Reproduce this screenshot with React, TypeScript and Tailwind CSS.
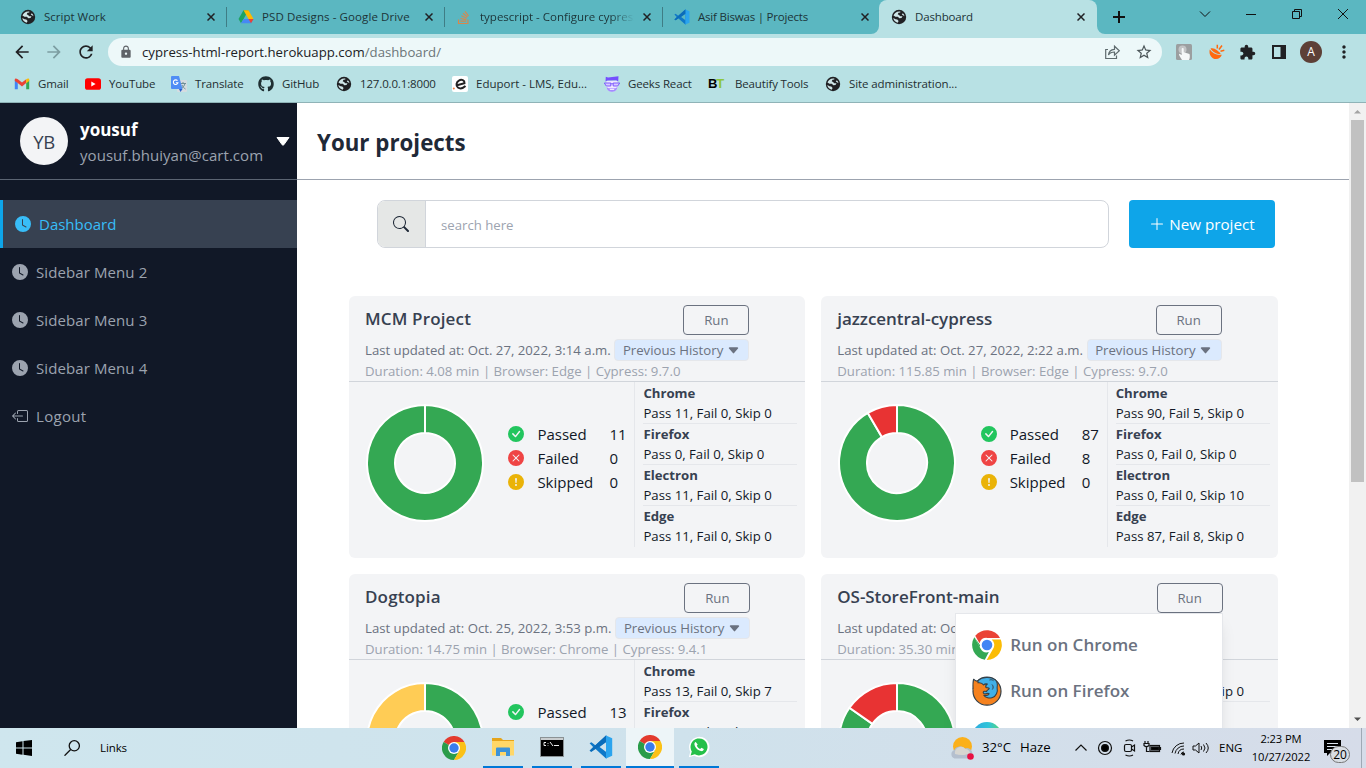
import React from "react";
import {
  BsBoxArrowLeft, BsCaretDownFill, BsCheckCircleFill, BsClockFill, BsExclamationCircleFill,
  BsPlusLg, BsSearch, BsXCircleFill,
} from "react-icons/bs";
import { MdArrowBack, MdArrowForward, MdExtension, MdLock, MdMoreVert, MdRefresh, MdStarBorder } from "react-icons/md";
import { FaGithub, FaStackOverflow } from "react-icons/fa";

/* ---------- icons ---------- */

function Globe() {
  return (
    <svg width="16" height="16" viewBox="0 0 16 16" className="shrink-0">
      <circle cx="8" cy="8" r="7.2" fill="#202124" />
      <path d="M9.300 2.500C6 2 3.300 3.800 2.500 6.500l2 1.300h2.300l1.500 1.500 2.200-.3 1-1.800H9.300L8 6l-1.300-.7.800-1.500 1.800-.3z" fill="#cfe6e8" />
      <path d="M2.300 8.900c.4 2.300 2 4.200 4.400 4.800l.9-1.700-1.300-1.500-1.800-.3z" fill="#cfe6e8" />
      <path d="M11.800 4.200l-1 1.400 2.700 1.600c-.2-1.200-.8-2.200-1.700-3z" fill="#cfe6e8" />
    </svg>
  );
}

function Drive() {
  return (
    <svg width="16" height="16" viewBox="0 0 16 16" className="shrink-0">
      <path d="M5.500 1.200h5L5.600 9.900 3 14.300.5 9.900z" fill="#1ea362" />
      <path d="M5.500 1.200h5l5 8.700h-5z" fill="#ffba00" />
      <path d="M5.600 9.900h9.900L13 14.300H3z" fill="#4688f4" />
      <path d="M10.500 9.900h5L13 14.300z" fill="#ea4335" />
    </svg>
  );
}

function VsCode({ size }: { size: number }) {
  return (
    <svg width={size} height={size} viewBox="0 0 24 24" className="shrink-0">
      <path d="M17 .6L6.300 10.300 2.400 7.300.6 8.200 4.100 12 .6 15.800l1.800.9 3.900-3L17 23.400l1-.5V1z M17.200 7v10l-6.600-5z" fill="#0f78c8" fillRule="evenodd" />
      <path d="M17 .6l6.200 2.700v17.400L17 23.400z" fill="#2ba4ee" />
      <path d="M.6 15.800L17 .6v6.500L2.400 16.700z" fill="#0b6cba" />
    </svg>
  );
}

function Chrome({ size }: { size: number }) {
  return (
    <svg width={size} height={size} viewBox="0 0 48 48" className="shrink-0">
      <path d="M24 24L3.200 12A24 24 0 0 1 44.800 12z" fill="#e33b2e" />
      <path d="M24 24L34.400 30 24 48A24 24 0 0 1 3.200 12z" fill="#2a9c4a" />
      <path d="M24 12h20.800A24 24 0 0 1 24 48l10.400-18z" fill="#fbc116" />
      <circle cx="24" cy="24" r="12" fill="#fff" />
      <circle cx="24" cy="24" r="9.400" fill="#3a7cec" />
    </svg>
  );
}

function MenuChrome() {
  return (
    <svg width="30" height="30" viewBox="0 0 48 48" className="shrink-0">
      <path d="M5.200 9.300A24 24 0 0 1 44.800 12.600L24 12.600A11.800 11.800 0 0 0 12 21.300z" fill="#ea4335" />
      <path d="M46 15A24 24 0 0 1 23.500 48l10.300-18A11.500 11.500 0 0 0 31.500 15z" fill="#fbbc05" />
      <path d="M3.700 11.500L13.600 29.500A11.500 11.500 0 0 0 27 35.200L20.500 47.700A24 24 0 0 1 3.700 11.500z" fill="#34a853" />
      <path d="M3.700 11.500L12.500 27.500 12.800 24z" fill="#34a853" />
      <circle cx="24" cy="24" r="8.500" fill="#4285f4" />
    </svg>
  );
}

function Firefox() {
  return (
    <svg width="30" height="30" viewBox="0 0 30 30" className="shrink-0" strokeLinejoin="round">
      <circle cx="15" cy="15.200" r="14" fill="#f5821f" stroke="#333f48" strokeWidth="1.200" />
      <path d="M1 13.500C.8 9 1 5.500 1.600 3.200 3 5 4.200 5.300 5.800 5L8 9l-5 6z" fill="#f5821f" />
      <path d="M1.100 13.500C.8 9 1 5.500 1.600 3.200 3 5 4.200 5.300 5.800 5" fill="none" stroke="#333f48" strokeWidth="1.100" />
      <path d="M6 4.600C10 .8 19 .2 23.500 4c1.800 2 2.200 4.500 1.600 7.500 1 4.500-1.100 8.700-4.600 10-3 1.200-7 .4-8.700-2.200 3 .7 5-.3 5.300-1.600-1.200-.9-2.700.3-4.300.2-2-.3-2-2-.6-2.600.8-.3 1.700 0 2.400.3-.2-1.600 2.300-1.700 2.600-3.200-.6-.8-2-.5-3.200-.9-.7-1.400 0-2.600 1.400-3.500-1.400-.3-3 0-3.800 1C10.300 7 8 6.500 6 6.800z" fill="#41b0e8" stroke="#333f48" strokeWidth="1.100" />
      <path d="M17.500 4c1.500-.5 3-.3 4 .7M20 8.500c1.500 1.500 1.500 3.500.3 5" fill="none" stroke="#333f48" strokeWidth="1" />
    </svg>
  );
}

function EdgeLogo() {
  return (
    <svg width="30" height="30" viewBox="0 0 30 30" className="shrink-0">
      <defs>
        <linearGradient id="edge" x1="0" x2="1" y1="0" y2="0">
          <stop offset="0" stopColor="#2ba8e0" />
          <stop offset=".55" stopColor="#30c4d8" />
          <stop offset="1" stopColor="#5bd770" />
        </linearGradient>
      </defs>
      <circle cx="15" cy="15" r="15" fill="url(#edge)" />
    </svg>
  );
}

function Gmail() {
  return (
    <svg width="16" height="16" viewBox="0 0 16 16" className="shrink-0">
      <path d="M.8 4v9.200h3V7z" fill="#4285f4" />
      <path d="M15.200 4v9.200h-3V7z" fill="#34a853" />
      <path d="M.8 3.300C.8 2.300 2.200 2 3.800 3.300L8 6.500l4.200-3.200v3.800L8 10.400 3.800 7.100.8 5z" fill="#ea4335" />
      <path d="M12.200 3.300c1.600-1.300 3-.9 3 .3V5l-3 2.200z" fill="#fbbc04" />
    </svg>
  );
}

function YouTube() {
  return (
    <svg width="16" height="16" viewBox="0 0 16 16" className="shrink-0">
      <rect x="0" y="2.200" width="16" height="11.600" rx="2.600" fill="#f00" />
      <path d="M6.300 5.500v5l4.300-2.500z" fill="#fff" />
    </svg>
  );
}

function Translate() {
  return (
    <svg width="16" height="16" viewBox="0 0 16 16" className="shrink-0">
      <rect x="6" y="4" width="10" height="12" rx="1" fill="#d5dce0" />
      <path d="M9.500 7.500h5.500M12 6v1.500M14 7.500c-.5 2-2 4-3.500 5M11 9c.7 1.700 1.800 3 3.500 4" stroke="#6f8f97" fill="none" />
      <path d="M1 0h7l3.500 13H1a1 1 0 0 1-1-1V1a1 1 0 0 1 1-1z" fill="#4f8df5" />
      <path d="M8 13h3.500L9.500 16z" fill="#2a5fc9" />
      <path d="M6.500 4.700A2.300 2.300 0 1 0 6.900 6.800H4.800" stroke="#fff" strokeWidth="1.100" fill="none" />
    </svg>
  );
}

function Eduport() {
  return (
    <svg width="16" height="16" viewBox="0 0 16 16" className="shrink-0">
      <rect width="16" height="16" rx="2" fill="#fff" />
      <path d="M4.500 9.200l7.500-2C12.300 4.300 9 3 6.700 4.400 3.600 6 3.200 9.800 5.400 11.500c2 1.400 5 .9 7.600-1.500" stroke="#222" strokeWidth="2" fill="none" transform="translate(.5)" />
      <circle cx="1.800" cy="12.500" r="1" fill="#f47c3c" />
    </svg>
  );
}

function Geeks() {
  return (
    <svg width="16" height="16" viewBox="0 0 16 16" className="shrink-0">
      <path d="M2.500 5h11v5.500c0 3-2.500 5-5.500 5s-5.500-2-5.500-5z" fill="#eee8ff" />
      <path d="M1.500 5.500l.3-4.700L4 1.500 14.500.3l-.3 5.200-2-1.300-8.700.3z" fill="#754ffe" />
      <path d="M.3 7h6.500v3H2.300zM9.200 7h6.500l-2 3H9.200zM6.800 7.800h2.400" fill="#d8cbff" stroke="#754ffe" strokeWidth=".9" />
      <path d="M2.500 11c.8 4 3 4.700 5.500 4.700s4.700-.7 5.500-4.700l-2 1.300h-7z" fill="#a58bff" />
      <path d="M5.800 13.300h4.400" stroke="#fff" />
    </svg>
  );
}

function ShareIcon() {
  return (
    <svg width="17" height="16" viewBox="0 0 17 16" className="shrink-0" fill="none" stroke="#5f6b6e" strokeWidth="1.200">
      <path d="M4 5.500H1.700v9h10.800v-3" />
      <path d="M4.500 11c.3-4 2.500-5.500 6-5.700V2.200l4.800 4.500-4.800 4.400V8C7.500 8 5.800 8.800 4.500 11z" />
    </svg>
  );
}

/* ---------- browser chrome ---------- */

const tabs: { title: string; icon: React.ReactNode }[] = [
  { title: "Script Work", icon: <Globe /> },
  { title: "PSD Designs - Google Drive", icon: <Drive /> },
  { title: "typescript - Configure cypress", icon: <FaStackOverflow className="size-[15px] text-[#d9874b]" /> },
  { title: "Asif Biswas | Projects", icon: <VsCode size={16} /> },
];

function TabClose() {
  return (
    <svg width="8" height="8" viewBox="0 0 8 8" className="shrink-0" stroke="#202124" strokeWidth="1.500">
      <path d="M.5.5l7 7M7.500.5l-7 7" />
    </svg>
  );
}

function TabStrip() {
  return (
    <div className="flex h-[34px] bg-[#5bb7c1] pl-[9px] text-[#1c3438]">
      {tabs.map((t, i) => (
        <div key={t.title} className="flex w-[218px] shrink-0 items-center pl-[11px]">
          <span className="flex w-[24px]">{t.icon}</span>
          <span
            className={
              i === 2
                ? "w-[154px] overflow-hidden whitespace-nowrap [mask-image:linear-gradient(to_right,#000_85%,transparent)]"
                : i === 3
                  ? "w-[163px] tracking-[-0.200px] whitespace-nowrap"
                  : i === 1
                    ? "w-[163px] tracking-[0.100px] whitespace-nowrap"
                    : "w-[163px] whitespace-nowrap"
            }
          >
            {t.title}
          </span>
          <span className={i === 2 ? "ml-[9px] flex w-[12px]" : "flex w-[12px]"}><TabClose /></span>
          {i < 3 && <span className="ml-[7px] h-5 w-px bg-[#3f7d85]" />}
        </div>
      ))}
      <svg width="8" height="34" viewBox="0 0 8 34" className="-ml-[10px] shrink-0"><path d="M8 26v8H0a8 8 0 0 0 8-8z" fill="#b8e1e4" /></svg>
      <div className="flex w-[218px] shrink-0 items-center rounded-t-lg bg-[#b8e1e4] pl-[12px]">
        <span className="flex w-[24px]"><Globe /></span>
        <span className="w-[162px] tracking-[-0.150px]">Dashboard</span>
        <TabClose />
      </div>
      <svg width="8" height="34" viewBox="0 0 8 34" className="shrink-0"><path d="M0 26v8h8a8 8 0 0 1-8-8z" fill="#b8e1e4" /></svg>
      <svg width="260" height="34" viewBox="0 0 260 34" className="shrink-0" fill="none" stroke="#111">
        <path d="M8 17h12M14 11v12" strokeWidth="2" />
        <path d="M95 11.500l5 5 5-5" strokeWidth="1" />
        <path d="M141 14.500h10" />
        <path d="M187.500 11.500h7v7h-7zM189.500 11.500v-2h7v7h-2" />
        <path d="M233 9l10 10M243 9l-10 10" />
      </svg>
    </div>
  );
}

function Toolbar() {
  return (
    <div className="flex h-[36px] items-center pl-3 text-[#202124]">
      <span className="flex w-8"><MdArrowBack className="size-5" /></span>
      <span className="flex w-8 text-[#7c9da1]"><MdArrowForward className="size-5" /></span>
      <span className="flex w-8"><MdRefresh className="size-5" /></span>
      <div className="flex h-7 w-[1054px] items-center rounded-full bg-[#edf8f9] pl-[11px] text-[13.200px]">
        <MdLock className="size-[14px] text-[#5f6368]" />
        <span className="ml-[9px] grow pt-[2px] whitespace-nowrap">cypress-html-report.herokuapp.com<span className="text-[#6b7578]">/dashboard/</span></span>
        <ShareIcon />
        <MdStarBorder className="mr-[9px] ml-[14px] size-[18px] text-[#4b5558]" />
      </div>
      <svg width="16" height="16" viewBox="0 0 16 16" className="ml-[14px] shrink-0">
        <rect width="16" height="16" rx="1.500" fill="#9b9fa0" />
        <circle cx="6.500" cy="5.500" r="4" fill="#c3c5c6" />
        <path d="M5.700 5v6L3.500 9.800c-1 .3-.5 1.300 2.500 6.200h7c1-2 1-4 .5-6L7.700 8.300V5c0-1.200-2-1.200-2 0z" fill="#f5f8f8" />
      </svg>
      <svg width="16" height="16" viewBox="0 0 16 16" className="ml-[17px] shrink-0" fill="none">
        <path d="M.8 5.500C-.5 10 2.500 15 7 15c3 0 5-1.800 5.800-4.200C8 11.500 3.500 9.500.8 5.500z" fill="#ff6a0f" />
        <path d="M1.500 4.500c2-1 4.500.2 6.500 1.700s4 3.300 3.500 4C8 10.500 3.500 8 1.500 4.500z" fill="#ff6a0f" />
        <path d="M8.300 4.500V.8M10 5.500l3-4M11.500 7.200l3.800-1" stroke="#ff6a0f" strokeWidth="1.500" />
      </svg>
      <MdExtension className="ml-[14px] size-[17px] shrink-0" />
      <svg width="14" height="14" viewBox="0 0 14 14" className="ml-4 shrink-0"><path d="M0 0h14v14H0zM2 2v10h6.500V2z" fill="#202124" fillRule="evenodd" /></svg>
      <span className="ml-[14px] flex size-[22px] shrink-0 items-center justify-center rounded-full bg-[#5d4037] text-[12px] text-white">A</span>
      <MdMoreVert className="ml-[12px] size-5 shrink-0" />
    </div>
  );
}

function Bookmarks() {
  return (
    <div className="flex h-[33px] items-center border-b border-[#8fb3b7] pb-[4px] pl-[14px] tracking-[-0.150px] whitespace-nowrap text-[#1f2f32]">
      <span className="flex w-[71px] items-center gap-2"><Gmail />Gmail</span>
      <span className="flex w-[86px] items-center gap-2"><YouTube />YouTube</span>
      <span className="flex w-[87px] items-center gap-2"><Translate />Translate</span>
      <span className="flex w-[78px] items-center gap-2"><FaGithub className="size-4" />GitHub</span>
      <span className="flex w-[116px] items-center gap-2"><Globe />127.0.0.1:8000</span>
      <span className="flex w-[152px] items-center gap-2 tracking-normal"><Eduport />Eduport - LMS, Edu...</span>
      <span className="flex w-[104px] items-center gap-2"><Geeks />Geeks React</span>
      <span className="flex w-[117px] items-center"><span className="w-[27px] font-['Liberation_Sans'] text-[13px] font-bold tracking-[-1.200px] text-black">B<span className="text-[#8cc63f]">T</span></span>Beautify Tools</span>
      <span className="flex items-center gap-2 tracking-[-0.100px]"><Globe />Site administration...</span>
    </div>
  );
}

/* ---------- sidebar ---------- */

function Sidebar() {
  return (
    <aside className="w-[297px] shrink-0 bg-[#111827] text-[15px] text-[#9ca3af]">
      <div className="flex h-[77px] items-center border-b border-[#5b6472] pl-5">
        <div className="flex size-12 items-center justify-center rounded-full bg-[#f3f4f6] pt-px text-[18.500px] tracking-[-0.500px] text-[#374151]">YB</div>
        <div className="ml-3 w-[196px] pt-px leading-[26px] whitespace-nowrap">
          <div className="pt-px text-[17px] font-bold text-white">yousuf</div>
          <div className="-mt-px tracking-[0.050px]">yousuf.bhuiyan@cart.com</div>
        </div>
        <svg width="14" height="9" viewBox="0 0 14 9"><path d="M1 .5h12L7.800 7.800q-.8.9-1.600 0z" fill="#fff" stroke="#fff" strokeLinejoin="round" /></svg>
      </div>
      <nav className="pt-5 tracking-[0.100px]">
        <div className="flex h-12 items-center gap-2 border-l-[3px] border-[#0ea5e9] bg-[#374151] pl-3 tracking-normal text-[#38bdf8]"><BsClockFill className="size-4" />Dashboard</div>
        <div className="flex h-12 items-center gap-2 pl-3"><BsClockFill className="size-4" />Sidebar Menu 2</div>
        <div className="flex h-12 items-center gap-2 pl-3"><BsClockFill className="size-4" />Sidebar Menu 3</div>
        <div className="flex h-12 items-center gap-2 pl-3"><BsClockFill className="size-4" />Sidebar Menu 4</div>
        <div className="flex h-12 items-center gap-2 pl-3 tracking-[0.300px]"><BsBoxArrowLeft className="size-4" />Logout</div>
      </nav>
    </aside>
  );
}

/* ---------- project cards ---------- */

type Slice = [number, string];
type Project = {
  name: string;
  updated: string;
  meta: string;
  counts: [number, number, number];
  slices: Slice[];
  browsers: [number, number, number][];
  evening?: boolean;
  menuOpen?: boolean;
};

const GREEN = "#34a853";
const RED = "#e83333";
const YELLOW = "#ffcc55";

const projects: Project[] = [
  {
    name: "MCM Project", updated: "Oct. 27, 2022, 3:14 a.m.", meta: "Duration: 4.08 min | Browser: Edge | Cypress: 9.7.0",
    counts: [11, 0, 0], slices: [[1, GREEN]], browsers: [[11, 0, 0], [0, 0, 0], [11, 0, 0], [11, 0, 0]],
  },
  {
    name: "jazzcentral-cypress", updated: "Oct. 27, 2022, 2:22 a.m.", meta: "Duration: 115.85 min | Browser: Edge | Cypress: 9.7.0",
    counts: [87, 8, 0], slices: [[0.916, GREEN], [0.084, RED]], browsers: [[90, 5, 0], [0, 0, 0], [0, 0, 10], [87, 8, 0]],
  },
  {
    name: "Dogtopia", updated: "Oct. 25, 2022, 3:53 p.m.", meta: "Duration: 14.75 min | Browser: Chrome | Cypress: 9.4.1",
    counts: [13, 0, 7], slices: [[0.65, GREEN], [0.35, YELLOW]], browsers: [[13, 0, 7], [0, 0, 0], [0, 0, 0], [0, 0, 0]], evening: true,
  },
  {
    name: "OS-StoreFront-main", updated: "Oct. 25, 2022, 3:53 p.m.", meta: "Duration: 35.30 min",
    counts: [11, 2, 0], slices: [[0.847, GREEN], [0.153, RED]], browsers: [[11, 2, 0], [0, 0, 0], [0, 0, 0], [0, 0, 0]], evening: true, menuOpen: true,
  },
];

function Donut({ slices }: { slices: Slice[] }) {
  const R = 58, r = 30, c = 60;
  const pt = (rad: number, f: number) => `${c + rad * Math.sin(f * 2 * Math.PI)} ${c - rad * Math.cos(f * 2 * Math.PI)}`;
  let start = 0;
  return (
    <svg width="120" height="120" viewBox="0 0 120 120">
      {slices.map(([share, color]) => {
        const a = start;
        const b = start + Math.min(share, 0.99999);
        start += share;
        const large = share > 0.5 ? 1 : 0;
        return (
          <path
            key={color}
            d={`M${pt(R, a)}A${R} ${R} 0 ${large} 1 ${pt(R, b)}L${pt(r, b)}A${r} ${r} 0 ${large} 0 ${pt(r, a)}Z`}
            fill={color} stroke="#fff" strokeWidth="2"
          />
        );
      })}
    </svg>
  );
}

function RunMenu() {
  return (
    <div className="absolute top-[30px] right-0 z-10 w-[267.500px] border border-[#e5e7eb] bg-white py-2 pl-4 text-[17px] font-semibold text-[#6b7280] shadow-lg">
      <div className="flex h-[46px] items-center gap-2"><MenuChrome />Run on Chrome</div>
      <div className="flex h-[46px] items-center gap-2"><Firefox />Run on Firefox</div>
      <div className="flex h-[46px] items-center gap-2"><EdgeLogo />Run on Edge</div>
    </div>
  );
}

const browserNames = ["Chrome", "Firefox", "Electron", "Edge"];

function Card({ p }: { p: Project }) {
  return (
    <div className="h-[262px] rounded-md bg-[#f3f4f6] text-[13.200px] whitespace-nowrap">
      <div className="h-[86px] border-b border-[#d1d5db] pt-[9px] pl-4">
        <div className="flex w-fit flex-col">
          <div className="flex h-[30px] justify-between">
            <span className={p.name.length < 12 ? "text-[17px] leading-[27px] font-semibold tracking-[0.150px] text-[#374151]" : "text-[17px] leading-[27px] font-semibold tracking-[-0.050px] text-[#374151]"}>{p.name}</span>
            <span className="relative">
              <span className="flex h-[30px] w-[66px] items-center justify-center rounded border border-[#6b7280] pt-px text-[#6b7280]">Run</span>
              {p.menuOpen && <RunMenu />}
            </span>
          </div>
          <div className="mt-1 flex h-[22px] items-center text-[#6b7280]">
            <span className={p.evening ? "w-[250.400px] pt-[2px]" : "w-[249.400px] pt-[2px]"}>Last updated at: {p.updated}</span>
            <span className="flex h-[22px] w-[135px] items-center gap-[4px] rounded border border-[#e5e7eb] bg-[#dbeafe] pl-[7.500px]"><span className="pt-[2px]">Previous History</span> <BsCaretDownFill className="size-[13px]" /></span>
          </div>
          <div className="leading-[20px] text-[#9ca3af]">{p.meta}</div>
        </div>
      </div>
      <div className="flex">
        <div className="w-[142.400px] pt-[21px] pl-4"><Donut slices={p.slices} /></div>
        <div className="mt-[40px] ml-[17px] h-[72px] w-[126px] text-[15px] leading-6 text-[#111827]">
          <div className="flex items-center"><span className="w-[29px]"><BsCheckCircleFill className="size-4 text-[#22c55e]" /></span><span className="w-[72px]">Passed</span>{p.counts[0]}</div>
          <div className="flex items-center"><span className="w-[29px]"><BsXCircleFill className="size-4 text-[#ef4444]" /></span><span className="w-[72px]">Failed</span>{p.counts[1]}</div>
          <div className="flex items-center"><span className="w-[29px]"><BsExclamationCircleFill className="size-4 text-[#eab308]" /></span><span className="w-[72px]">Skipped</span>{p.counts[2]}</div>
        </div>
        <div className="h-[165px] w-[163px] border-l border-[#e5e7eb] pt-px pl-2">
          {browserNames.map((name, i) => (
            <div key={name} className={i < 3 ? "h-[41px] border-b border-[#e5e7eb]" : "h-[41px]"}>
              <div className="pt-px leading-[19px] font-bold text-[#374151]">{name}</div>
              <div className="leading-[20px] text-[#111827]">Pass {p.browsers[i][0]}, Fail {p.browsers[i][1]}, Skip {p.browsers[i][2]}</div>
            </div>
          ))}
        </div>
      </div>
    </div>
  );
}

function Main() {
  return (
    <main className="w-[1052px] shrink-0 overflow-hidden bg-white">
      <div className="flex h-[77px] items-center border-b border-[#9ca3af] pl-5 text-[22.300px] font-bold text-[#1f2937]"><h1 className="pt-[4px]">Your projects</h1></div>
      <div className="flex pt-5 pl-20">
        <div className="flex h-12 w-[732px] overflow-hidden rounded-lg border border-[#d1d5db] text-[13.200px] text-[#9ca3af]">
          <span className="-my-px -ml-px flex w-[49px] items-center justify-center border-r border-[#d1d5db] bg-[#e5e7e6] text-[#1f2937]"><BsSearch className="size-4" /></span>
          <span className="flex items-center pt-[4px] pl-[15px]">search here</span>
        </div>
        <div className="ml-5 flex h-12 w-[146px] items-center justify-center gap-[4px] rounded bg-[#0ea5e9] text-[15.200px] text-white"><BsPlusLg className="size-[16px]" />New project</div>
      </div>
      <div className="mt-12 ml-[52px] grid w-[928.500px] grid-cols-2 gap-4">
        {projects.map((p) => <Card key={p.name} p={p} />)}
      </div>
    </main>
  );
}

function Scrollbar() {
  return (
    <div className="flex w-[17px] flex-col items-center justify-between bg-[#f1f1f1]">
      <svg width="17" height="17" viewBox="0 0 17 17"><path d="M5 10.500h7L8.500 7z" fill="#a3a3a3" /></svg>
      <div className="mb-auto h-[362px] w-[13px] bg-[#c1c1c1]" />
      <svg width="17" height="17" viewBox="0 0 17 17"><path d="M5 6.500h7L8.500 10z" fill="#505050" /></svg>
    </div>
  );
}

/* ---------- taskbar ---------- */

function Taskbar() {
  return (
    <footer className="flex h-10 bg-linear-to-r from-[#cfe6ee] via-[#cfe2ec] to-[#d6dce9] whitespace-nowrap text-black">
      <div className="flex w-[434px] items-center pl-4">
        <svg width="16" height="16" viewBox="0 0 16 16"><path d="M0 2.300L6.500 1.300v6.300H0zM7.500 1.100L16 0v7.600H7.500zM0 8.500h6.500v6.300L0 13.800zM7.500 8.500H16V16l-8.500-1.200z" /></svg>
        <svg width="16" height="16" viewBox="0 0 16 16" className="ml-8" fill="none" stroke="#111" strokeWidth="1.300"><circle cx="10.300" cy="5.800" r="5.100" /><path d="M6.700 9.500L.5 15.700" /></svg>
        <span className="ml-5 tracking-[-0.100px]">Links</span>
      </div>
      <div className="flex w-10 items-center justify-center"><Chrome size={24} /></div>
      <div className="ml-[9px] flex w-10 items-center justify-center border-b-2 border-[#0078d7]">
        <svg width="22" height="20" viewBox="0 0 22 20"><path d="M0 1h9l2 2h11v15H0z" fill="#e5a41b" /><path d="M0 4h22v14.500H0z" fill="#ffd768" /><path d="M4 19v-7.500a1 1 0 0 1 1-1h12a1 1 0 0 1 1 1V19h-4v-4H8v4z" fill="#3d93d8" /></svg>
      </div>
      <div className="ml-[9px] flex w-10 items-center justify-center border-b-2 border-[#0078d7]">
        <svg width="24" height="20" viewBox="0 0 24 20"><rect x=".5" y=".5" width="23" height="19" fill="#000" stroke="#8b9295" /><path d="M1 2h22" stroke="#c9cdcf" strokeWidth="2" /><path d="M6 5.500H4v3h2M8 6v.8M8 8v.6M10 5l3 4M14 8.500h5" stroke="#eee" fill="none" /></svg>
      </div>
      <div className="ml-[9px] flex w-10 items-center justify-center border-b-2 border-[#0078d7]"><VsCode size={24} /></div>
      <div className="ml-[5px] flex w-12 items-center justify-center border-b-2 border-[#0078d7] bg-[#edf5f8]"><Chrome size={24} /></div>
      <div className="ml-[5px] flex w-10 items-center justify-center border-b-2 border-[#0078d7]">
        <svg width="22" height="22" viewBox="0 0 22 22"><path d="M.8 21.200l1.500-5.400A10.200 10.200 0 1 1 6.200 19.800z" fill="#fff" /><path d="M2.600 19.400l1.200-4A8.500 8.500 0 1 1 6.800 18.300z" fill="#25c04a" /><path d="M7.700 6c-.9.300-1.600 1.400-1.200 2.700.8 3.100 3.600 5.800 6.700 6.400 1.400.2 2.600-.7 2.600-2.100l-2.400-1.200-1.200 1.300c-1.600-.6-2.700-1.700-3.400-3.300l.9-1.200z" fill="#fff" /></svg>
      </div>
      <div className="ml-auto flex w-[416px] items-center">
        <svg width="24" height="24" viewBox="0 0 24 24" className="shrink-0">
          <circle cx="12.500" cy="10.500" r="9.500" fill="#fbb01a" />
          <path d="M4.500 22.500a4.500 4.500 0 0 1-.2-8.500A6.500 6.500 0 0 1 15 12.500a5 5 0 0 1 4 10z" fill="#b4bfce" />
          <path d="M5 18a6 6 0 0 1 10.500-5 5 5 0 0 1 4.500 4c-4 2.500-10 2.500-15 1z" fill="#e3ddd2" opacity=".75" />
          <circle cx="20.500" cy="20.500" r="3.300" fill="#e81143" />
        </svg>
        <span className="ml-[8px] w-[38px] shrink-0 text-[13.200px]">32°C</span>
        <span className="w-[55px] shrink-0 text-[13.200px]">Haze</span>
        <svg width="140" height="20" viewBox="0 0 140 20" className="shrink-0" fill="none" stroke="#111" strokeWidth="1.200">
          <path d="M.5 12.500L6 7l5.500 5.500" />
          <circle cx="30" cy="10" r="6.500" /><circle cx="30" cy="10" r="3.400" fill="#000" />
          <rect x="49.500" y="6.500" width="7" height="7" rx="1.500" /><path d="M56.500 9l3-2v6l-3-2M50.500 3q4-2 7.500 0M50.500 17q4 2 7.500 0" />
          <rect x="75" y="7.500" width="9.500" height="6" /><rect x="76.500" y="9" width="7" height="3" fill="#000" /><path d="M85.500 9v3M70 3v3M73 3v3M69 5.500h5v2q-2.500 2.500-5 0zM71.500 9v4.500h3" />
          <path d="M97 15A12 12 0 0 1 109 5M100 15.500a9 9 0 0 1 9-7.500M103 16a6 6 0 0 1 6-5M106 16.500a3 3 0 0 1 3-2.500" strokeWidth="1" /><circle cx="108.500" cy="16" r="1" fill="#000" />
          <path d="M118 8h2.500L124 5v10l-3.500-3H118zM126 8q1.500 2 0 4M128.500 6.500q3 3.500 0 7M131 5q4.500 5 0 10" strokeWidth="1" />
        </svg>
        <span className="ml-[4px] w-[30px] shrink-0">ENG</span>
        <span className="w-[64px] shrink-0 text-center text-[11.200px] leading-[18px] tracking-[-0.100px]"><span className="block">2:23 PM</span><span className="block">10/27/2022</span></span>
        <svg width="17" height="17" viewBox="0 0 17 17" className="ml-[11px] shrink-0"><path d="M0 0h17v13H6l-3 3v-3H0z" /><path d="M3 3.500h11M3 6.500h11M3 9.500h8" stroke="#dbe3ec" /></svg>
        <span className="z-10 mt-[13px] -ml-[11px] flex h-[17px] w-5 shrink-0 items-center justify-center rounded-full border border-[#777] bg-[#d8dde3] text-[12px]">20</span>
        <span className="ml-auto h-full w-px shrink-0 bg-[#9fa9b5]" />
        <span className="w-1 shrink-0" />
      </div>
    </footer>
  );
}

export default function App() {
  return (
    <div className="flex h-[768px] w-[1366px] flex-col overflow-hidden bg-white font-['Open_Sans',sans-serif] text-[11.500px]">
      <header className="h-[103px] shrink-0 bg-[#b8e1e4]">
        <TabStrip />
        <Toolbar />
        <Bookmarks />
      </header>
      <div className="flex h-[625px] shrink-0 overflow-hidden">
        <Sidebar />
        <Main />
        <Scrollbar />
      </div>
      <Taskbar />
    </div>
  );
}
